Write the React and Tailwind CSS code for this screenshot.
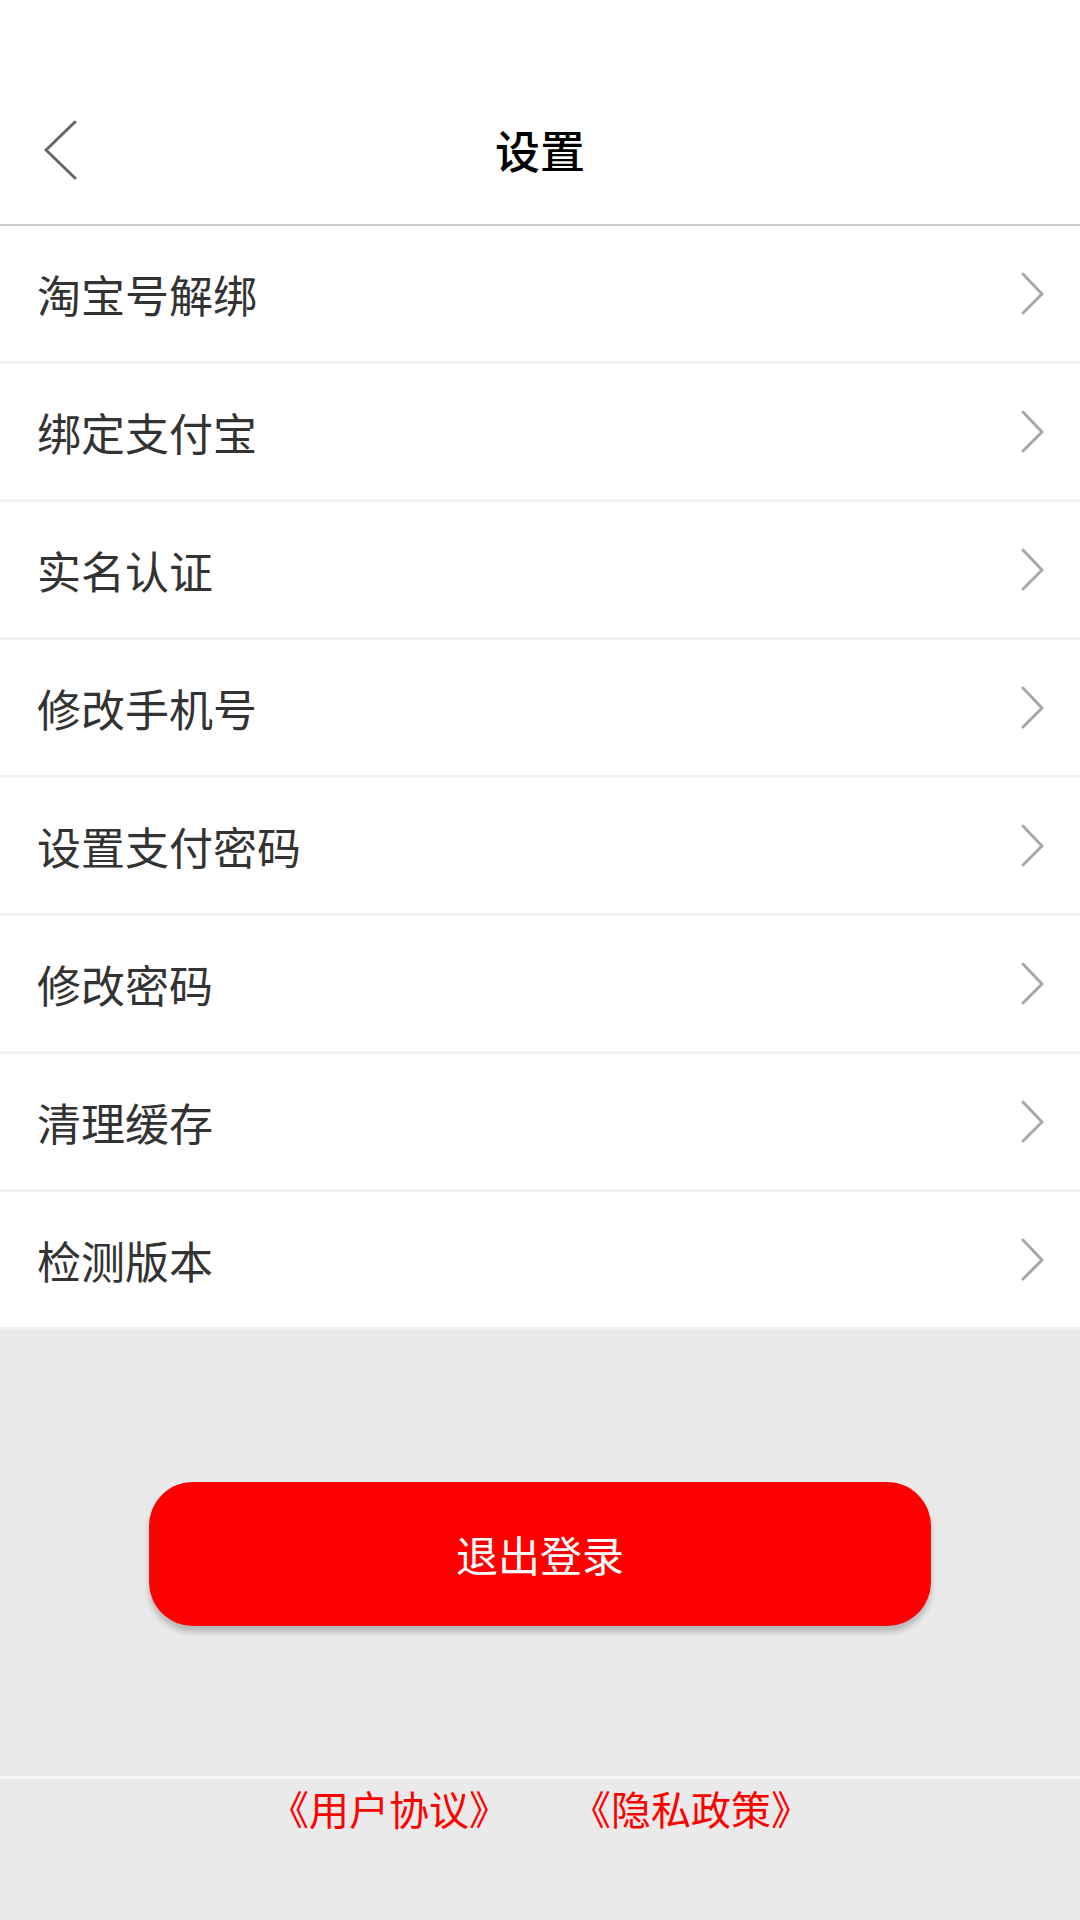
import React from 'react';

const items = ['淘宝号解绑', '绑定支付宝', '实名认证', '修改手机号', '设置支付密码', '修改密码', '清理缓存', '检测版本'];

const BackIcon = () => (
  <svg width="34" height="60" viewBox="0 0 34 60" fill="none">
    <polyline points="31,2 2,30 31,58" stroke="#666666" strokeWidth="3" strokeLinecap="round" strokeLinejoin="round" />
  </svg>
);

const Chevron = () => (
  <svg width="24" height="44" viewBox="0 0 24 44" fill="none">
    <polyline points="2,2 21,22 2,41" stroke="#a8a8a8" strokeWidth="3" strokeLinecap="round" strokeLinejoin="round" />
  </svg>
);

export default function App() {
  return (
    <div
      className="w-[1080px] h-[1920px] flex flex-col bg-[#eaeaea] overflow-hidden"
      style={{ fontFamily: '"Noto Sans CJK SC", "Noto Sans", sans-serif' }}
    >
      {/* header */}
      <div className="bg-white pt-[75px] border-b-2 border-[#cccccc] shadow-[0_1px_1px_rgba(0,0,0,0.06)]">
        <div className="relative h-[149px] flex items-center justify-center">
          <button type="button" className="absolute left-[44px] top-1/2 -translate-y-1/2">
            <BackIcon />
          </button>
          <h1 className="text-[45px] font-medium text-black leading-none">设置</h1>
        </div>
      </div>

      {/* list */}
      <div className="bg-white">
        {items.map((label) => (
          <div key={label} className="h-[138px] flex items-center justify-between pl-[37px] pr-[35px] border-b-[3px] border-[#f2f2f2]">
            <span className="text-[44px] text-[#333333] leading-none">{label}</span>
            <Chevron />
          </div>
        ))}
      </div>

      {/* logout */}
      <div className="flex justify-center pt-[152px] pb-[150px]">
        <button
          type="button"
          className="w-[782px] h-[144px] rounded-[44px] bg-[#ff0000] text-white text-[42px] leading-none shadow-[0_6px_6px_rgba(0,0,0,0.22)]"
        >
          退出登录
        </button>
      </div>

      {/* footer links */}
      <div className="border-t-[3px] border-[#f6f6f6] h-[60px] flex items-center justify-center gap-[62px] text-[40px] text-[#ff0000] leading-none">
        <span>《用户协议》</span>
        <span>《隐私政策》</span>
      </div>
    </div>
  );
}
